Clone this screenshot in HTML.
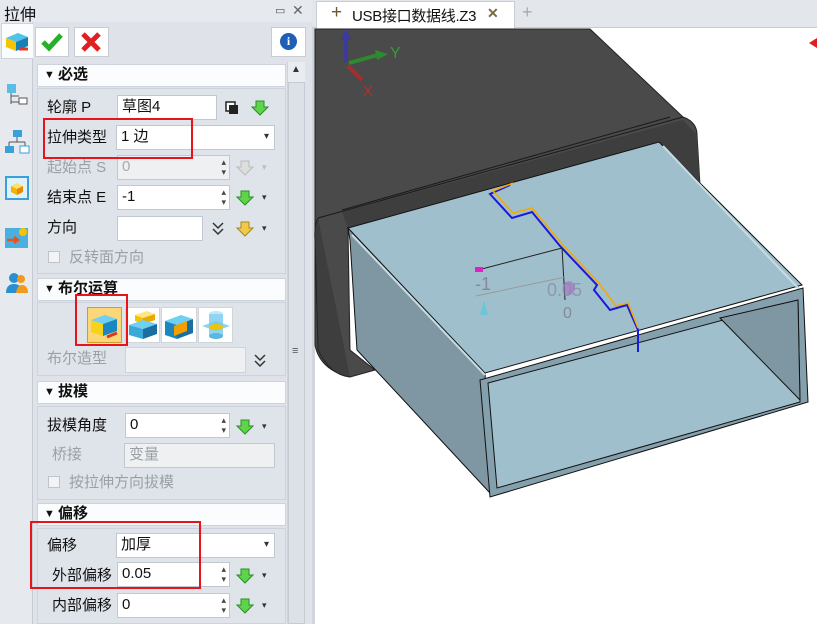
<!DOCTYPE html>
<html><head><meta charset="utf-8"><style>
*{box-sizing:border-box;margin:0;padding:0}
body{width:817px;height:624px;overflow:hidden;background:#fff;font-family:"Liberation Sans","Noto Sans CJK SC",sans-serif;font-size:15px;color:#111;position:relative}
.a{position:absolute}
.hdr{position:absolute;left:37px;width:249px;height:23px;background:#fbfcfd;border:1px solid #cdd3da;font-size:15px;font-weight:bold;padding-left:6px;line-height:20px}
.hdr:before{content:"▼ ";font-size:11px;position:relative;top:-1px}
.body{position:absolute;left:37px;width:249px;background:#dfe4ea;border:1px solid #cdd3da}
.lbl{position:absolute;left:47px;font-size:15px;transform:translateY(-4px)}
.in{position:absolute;background:#fff;border:1px solid #c3c8cf;height:25px;padding-left:4px;line-height:21px;font-size:15px}
.dis{background:#eef0f2;color:#aaa}
.sp:after{content:"▴\A▾";white-space:pre;position:absolute;right:3px;top:1px;font-size:9px;line-height:10px;color:#444}
.dd:after{content:"▾";position:absolute;right:5px;top:0;font-size:10px;color:#333}
.arr{position:absolute;width:18px;height:18px}
.sm{position:absolute;font-size:9px;color:#333}
.red{position:absolute;border:2px solid #e8141c}
</style></head><body>
<div class="a" style="left:0;top:0;width:312px;height:624px;background:#e6e9ee"></div>
<div class="a" style="left:4px;top:1px;font-size:16px">拉伸</div>
<div class="a" style="left:275px;top:4px;font-size:11px;color:#555">▭</div>
<div class="a" style="left:292px;top:2px;font-size:14px;color:#666">✕</div>
<div class="a" style="left:32px;top:22px;width:280px;height:602px;background:#dfe3e9;border-left:1px solid #c5cbd2"></div>
<div class="a" style="left:1px;top:23px;width:32px;height:36px;background:#fbfcfd;border:1px solid #cdd3da;border-right:none"></div>
<svg class="a" style="left:4px;top:30px" width="26" height="24"><polygon points="2,8 14,3 24,7 12,12" fill="#4fc3e8"/><polygon points="2,8 12,12 12,21 2,17" fill="#f6c400"/><polygon points="12,12 24,7 24,16 12,21" fill="#1a7fb3"/><path d="M15,19 L24,19" stroke="#e03a2a" stroke-width="3"/></svg>
<svg class="a" style="left:5px;top:82px" width="24" height="24"><rect x="2" y="2" width="9" height="9" fill="#5bbde6"/><path d="M6 11v11M6 14h8M6 20h8" stroke="#555" fill="none"/><rect x="14" y="16" width="8" height="6" fill="#fff" stroke="#555"/></svg>
<svg class="a" style="left:4px;top:128px" width="26" height="26"><rect x="9" y="2" width="9" height="7" fill="#3aa0d8"/><path d="M13 9v5M5 14h16M5 14v4M21 14v4" stroke="#555" fill="none"/><rect x="1" y="18" width="9" height="7" fill="#3aa0d8"/><rect x="16" y="18" width="9" height="7" fill="#fff" stroke="#3aa0d8"/></svg>
<svg class="a" style="left:5px;top:176px" width="24" height="24"><rect x="1" y="1" width="22" height="22" fill="#dff2fb" stroke="#3aa0d8" stroke-width="2"/><polygon points="6,10 12,7 18,10 12,13" fill="#ffe066"/><polygon points="6,10 12,13 12,19 6,16" fill="#f4b400"/><polygon points="12,13 18,10 18,16 12,19" fill="#e88a00"/></svg>
<svg class="a" style="left:4px;top:225px" width="26" height="24"><rect x="1" y="3" width="23" height="20" fill="#4bb0e0"/><circle cx="19" cy="7" r="4" fill="#f6c400"/><path d="M3 15h10M10 12l4 3-4 3" stroke="#e8531d" stroke-width="2.5" fill="none"/></svg>
<svg class="a" style="left:5px;top:272px" width="24" height="22"><circle cx="9" cy="6" r="5" fill="#2a8fd0"/><path d="M1 21c0-7 4-9 8-9s8 2 8 9z" fill="#2a8fd0"/><circle cx="16" cy="7" r="4" fill="#f29a1a"/><path d="M11 21c1-6 3-8 6-8s6 2 6 8z" fill="#f29a1a"/></svg>
<div class="a" style="left:35px;top:27px;width:34px;height:30px;background:#fff;border:1px solid #c8cdd4"></div>
<svg class="a" style="left:40px;top:32px" width="24" height="20"><path d="M3 10l6 6L21 3" stroke="#28b02a" stroke-width="5" fill="none"/></svg>
<div class="a" style="left:74px;top:27px;width:35px;height:30px;background:#fff;border:1px solid #c8cdd4"></div>
<svg class="a" style="left:80px;top:31px" width="22" height="22"><path d="M3 3L19 19M19 3L3 19" stroke="#e02020" stroke-width="5"/></svg>
<div class="a" style="left:271px;top:27px;width:35px;height:30px;background:#fff;border:1px solid #c8cdd4"></div>
<div class="a" style="left:280px;top:33px;width:17px;height:17px;border-radius:50%;background:#1f5fb5;color:#fff;font-size:12px;font-weight:bold;text-align:center;line-height:17px;font-family:'Liberation Serif',serif">i</div>
<div class="a" style="left:287px;top:62px;width:18px;height:562px;background:#e9ecf0;border-left:1px solid #cdd3da"></div>
<div class="a" style="left:291px;top:64px;font-size:10px;color:#333">▲</div>
<div class="a" style="left:288px;top:82px;width:17px;height:542px;background:#dce1e7;border:1px solid #c5cbd2"></div>
<div class="a" style="left:292px;top:345px;font-size:11px;color:#555">≡</div>

<div class="hdr" style="top:64px">必选</div>
<div class="body" style="top:88px;height:186px"></div>
<div class="lbl" style="top:100px">轮廓 P</div>
<div class="in" style="left:117px;top:95px;width:100px">草图4</div>
<svg class="a" style="left:225px;top:101px" width="14" height="14"><rect x="1" y="1" width="9" height="9" fill="#fff" stroke="#222" stroke-width="1.5"/><rect x="4" y="4" width="9" height="9" fill="#222"/></svg>
<svg class="arr" style="left:251px;top:99px"><path d="M5 2h8v6h4L9 16 1 8h4z" fill="#5fd34a" stroke="#2a8f25"/></svg>
<div class="lbl" style="top:130px">拉伸类型</div>
<div class="in dd" style="left:116px;top:125px;width:159px">1 边</div>
<div class="lbl" style="top:160px;color:#9aa0a6">起始点 S</div>
<div class="in dis sp" style="left:117px;top:155px;width:113px">0</div>
<svg class="arr" style="left:236px;top:159px"><path d="M5 2h8v6h4L9 16 1 8h4z" fill="#ddd" stroke="#bbb"/></svg>
<div class="sm" style="left:262px;top:162px;color:#bbb">▾</div>
<div class="lbl" style="top:190px">结束点 E</div>
<div class="in sp" style="left:117px;top:185px;width:113px">-1</div>
<svg class="arr" style="left:236px;top:189px"><path d="M5 2h8v6h4L9 16 1 8h4z" fill="#5fd34a" stroke="#2a8f25"/></svg>
<div class="sm" style="left:262px;top:192px">▾</div>
<div class="lbl" style="top:220px">方向</div>
<div class="in" style="left:117px;top:216px;width:86px"></div>
<svg class="a" style="left:211px;top:221px" width="14" height="16"><path d="M2 2l5 5 5-5M2 8l5 5 5-5" stroke="#333" stroke-width="1.5" fill="none"/></svg>
<svg class="arr" style="left:236px;top:220px"><path d="M5 2h8v6h4L9 16 1 8h4z" fill="#f2c94c" stroke="#a58a1a"/></svg>
<div class="sm" style="left:262px;top:223px">▾</div>
<div class="a" style="left:48px;top:251px;width:12px;height:12px;border:1px solid #c0c4c8;background:#f2f3f5"></div>
<div class="a" style="left:69px;top:246px;color:#9aa0a6">反转面方向</div>

<div class="hdr" style="top:278px">布尔运算</div>
<div class="body" style="top:302px;height:74px"></div>
<div class="a" style="left:87px;top:307px;width:35px;height:36px;background:#fcd77a;border:1px solid #d49a2a"></div>
<svg class="a" style="left:89px;top:310px" width="32" height="32"><polygon points="2,10 16,5 28,9 14,14" fill="#6fd0f2"/><polygon points="2,10 14,14 14,26 2,22" fill="#f7d21a"/><polygon points="14,14 28,9 28,21 14,26" fill="#1a88c0"/><path d="M18 27l10-4" stroke="#d83a20" stroke-width="3"/></svg>
<div class="a" style="left:125px;top:307px;width:35px;height:36px;background:#fff;border:1px solid #d0d5da"></div>
<svg class="a" style="left:127px;top:309px" width="32" height="32"><polygon points="8,6 20,2 28,5 16,9" fill="#ffe680"/><polygon points="8,6 16,9 16,15 8,12" fill="#f4c400"/><polygon points="16,9 28,5 28,11 16,15" fill="#e8a800"/><polygon points="2,16 16,11 30,15 16,20" fill="#6fd0f2"/><polygon points="2,16 16,20 16,30 2,26" fill="#3aa8d8"/><polygon points="16,20 30,15 30,25 16,30" fill="#1a6fa0"/></svg>
<div class="a" style="left:161px;top:307px;width:36px;height:36px;background:#fff;border:1px solid #d0d5da"></div>
<svg class="a" style="left:163px;top:309px" width="32" height="32"><polygon points="2,12 18,6 30,10 14,16" fill="#6fd0f2"/><polygon points="2,12 14,16 14,30 2,26" fill="#1a88c0"/><polygon points="14,16 30,10 30,24 14,30" fill="#1a6fa0"/><polygon points="11,17 24,12 24,22 11,27" fill="#f2a000"/></svg>
<div class="a" style="left:198px;top:307px;width:35px;height:36px;background:#fff;border:1px solid #d0d5da"></div>
<svg class="a" style="left:200px;top:309px" width="32" height="32"><ellipse cx="16" cy="5" rx="7" ry="3" fill="#bfe8f8"/><rect x="9" y="5" width="14" height="22" fill="#8fd4f0"/><polygon points="2,17 16,12 30,17 16,22" fill="#6fc8ec" opacity=".8"/><ellipse cx="16" cy="18" rx="7" ry="3" fill="#f2c400"/><ellipse cx="16" cy="27" rx="7" ry="3" fill="#5ab8e0"/></svg>
<div class="lbl" style="top:351px;color:#9aa0a6">布尔造型</div>
<div class="a" style="left:125px;top:347px;width:121px;height:26px;background:#eef0f2;border:1px solid #d0d4d8"></div>
<svg class="a" style="left:253px;top:353px" width="14" height="16"><path d="M2 2l5 5 5-5M2 8l5 5 5-5" stroke="#333" stroke-width="1.5" fill="none"/></svg>

<div class="hdr" style="top:381px">拔模</div>
<div class="body" style="top:406px;height:94px"></div>
<div class="lbl" style="top:418px">拔模角度</div>
<div class="in sp" style="left:125px;top:413px;width:105px">0</div>
<svg class="arr" style="left:236px;top:418px"><path d="M5 2h8v6h4L9 16 1 8h4z" fill="#5fd34a" stroke="#2a8f25"/></svg>
<div class="sm" style="left:262px;top:421px">▾</div>
<div class="lbl" style="top:447px;left:52px;color:#9aa0a6">桥接</div>
<div class="in dis" style="left:124px;top:443px;width:151px;color:#9aa0a6">变量</div>
<div class="a" style="left:48px;top:476px;width:12px;height:12px;border:1px solid #c0c4c8;background:#f2f3f5"></div>
<div class="a" style="left:69px;top:471px;color:#9aa0a6">按拉伸方向拔模</div>

<div class="hdr" style="top:503px">偏移</div>
<div class="body" style="top:528px;height:96px"></div>
<div class="lbl" style="top:538px">偏移</div>
<div class="in dd" style="left:116px;top:533px;width:159px">加厚</div>
<div class="lbl" style="top:568px;left:52px">外部偏移</div>
<div class="in sp" style="left:117px;top:562px;width:113px">0.05</div>
<svg class="arr" style="left:236px;top:567px"><path d="M5 2h8v6h4L9 16 1 8h4z" fill="#5fd34a" stroke="#2a8f25"/></svg>
<div class="sm" style="left:262px;top:570px">▾</div>
<div class="lbl" style="top:598px;left:52px">内部偏移</div>
<div class="in sp" style="left:117px;top:593px;width:113px">0</div>
<svg class="arr" style="left:236px;top:597px"><path d="M5 2h8v6h4L9 16 1 8h4z" fill="#5fd34a" stroke="#2a8f25"/></svg>
<div class="sm" style="left:262px;top:600px">▾</div>

<div class="red" style="left:43px;top:118px;width:150px;height:41px"></div>
<div class="red" style="left:75px;top:294px;width:53px;height:52px"></div>
<div class="red" style="left:30px;top:521px;width:171px;height:68px"></div>

<div class="a" style="left:312px;top:0;width:505px;height:28px;background:#e3e7eb;border-bottom:1px solid #c8cdd3"></div>
<div class="a" style="left:316px;top:1px;width:199px;height:28px;background:#fff;border:1px solid #c8cdd3;border-bottom:none"></div>
<div class="a" style="left:331px;top:2px;font-size:19px;color:#6a5a30">+</div>
<div class="a" style="left:352px;top:5px;font-size:15px;letter-spacing:-0.3px">USB接口数据线.Z3</div>
<div class="a" style="left:487px;top:5px;font-size:14px;color:#7a6a40;font-weight:bold">✕</div>
<div class="a" style="left:522px;top:2px;font-size:18px;color:#aaa">+</div>
<div class="a" style="left:312px;top:28px;width:3px;height:596px;background:#d0d6dc"></div>

<svg class="a" style="left:0;top:0" width="817" height="624">
<path d="M315,29 L590,29 L683,117 Q697,122 697,135 L700,185 L660,190 L348,228 L350,350 L375,370 L350,377 Q320,370 315,345 Z" fill="#4a4a4a" stroke="#222"/>
<path d="M318,218 L683,117" stroke="#1a1a1a"/>
<path d="M342,210 L670,117" stroke="#1a1a1a"/>
<path d="M318,218 Q314,225 315,240 L318,350 Q330,375 350,377" fill="#3e3e3e" stroke="#222"/>
<polygon points="342,212 683,120 697,135 700,185 348,228" fill="#3e3e3e"/>
<polygon points="348,228 485,372 490,493 357,350 350,240" fill="#7f97a2" stroke="#111"/>
<polygon points="348,228 659,142 802,285 485,373" fill="#a0bfcc" stroke="#111"/>
<path d="M352,235 L485,375" stroke="#c7dbe3" stroke-width="2"/>
<path d="M663,146 L800,290" stroke="#c7dbe3" stroke-width="2"/>
<polygon points="480,380 803,288 808,402 490,497" fill="#84a0ac" stroke="#111"/>
<polygon points="488,383 798,300 800,402 497,488" fill="#a0bfcc" stroke="#111"/>
<polygon points="720,318 798,300 800,400" fill="#7f97a2" stroke="#111"/>
<path d="M510,185 L490,194 L512,218 L532,212 L560,246 L597,285 L594,290 L610,310 L627,305 L638,330 L638,352" fill="none" stroke="#1a1ad8" stroke-width="2"/>
<path d="M513,183 L493,191 L513,213 L532,208 L562,244 L598,282 L616,306 L628,303 L638,328" fill="none" stroke="#f5a800" stroke-width="1.5"/>
<path d="M478,270 L562,248 L565,300" fill="none" stroke="#222"/>
<path d="M476,296 L565,277" stroke="#999"/>
<rect x="475" y="267" width="8" height="5" fill="#e020c0"/>
<text x="475" y="290" font-size="18" fill="#889" font-family="Liberation Sans">-1</text>
<text x="547" y="296" font-size="18" fill="#889" opacity=".7" font-family="Liberation Sans">0.05</text>
<text x="563" y="318" font-size="16" fill="#889" font-family="Liberation Sans">0</text>
<ellipse cx="569" cy="288" rx="6" ry="7" fill="#a070c0" opacity=".6"/>
<polygon points="484,300 480,315 488,315" fill="#5ec8d8" opacity=".8"/>
<path d="M346,62 L346,35" stroke="#3a3aa0" stroke-width="4"/>
<polygon points="341,40 346,28 351,40" fill="#3a3aa0"/>
<path d="M349,63 L378,55" stroke="#2e8a2e" stroke-width="4"/>
<polygon points="375,50 388,54 377,60" fill="#2e8a2e"/>
<text x="390" y="58" font-size="16" fill="#3a9a3a" font-family="Liberation Sans">Y</text>
<path d="M348,66 L362,80" stroke="#a03030" stroke-width="4"/>
<text x="363" y="96" font-size="15" fill="#b03030" font-family="Liberation Sans">X</text>
<path d="M809,43 L817,38 L817,48 Z" fill="#e02020"/>
</svg>
</body></html>
